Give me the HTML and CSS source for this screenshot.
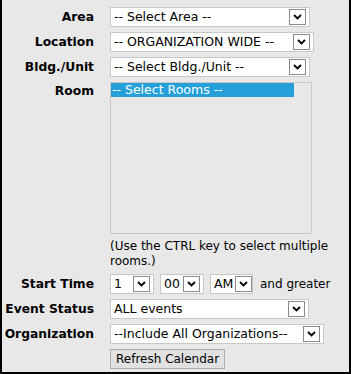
FILE: index.html
```html
<!DOCTYPE html>
<html lang="en">
<head>
    <meta charset="UTF-8">
    <meta name="viewport" content="width=device-width, initial-scale=1.0">
    <link rel="stylesheet" href="styles.css">
    <title>Calendar Filter</title>
</head>
<body>
    <div class="panel">
        <form class="filters" id="filters">
            <label class="label">Area</label>
            <div class="select select-area">
                <span class="value">-- Select Area --</span>
                <span class="arrow"><svg width="9" height="6" viewBox="0 0 9 6"><path d="M1 1 L4.5 4.5 L8 1" /></svg></span>
            </div>

            <label class="label">Location</label>
            <div class="select select-location">
                <span class="value">-- ORGANIZATION WIDE --</span>
                <span class="arrow"><svg width="9" height="6" viewBox="0 0 9 6"><path d="M1 1 L4.5 4.5 L8 1" /></svg></span>
            </div>

            <label class="label">Bldg./Unit</label>
            <div class="select select-area">
                <span class="value">-- Select Bldg./Unit --</span>
                <span class="arrow"><svg width="9" height="6" viewBox="0 0 9 6"><path d="M1 1 L4.5 4.5 L8 1" /></svg></span>
            </div>

            <label class="label label-top">Room</label>
            <div class="listbox">
                <div class="option selected">-- Select Rooms --</div>
            </div>

            <span></span>
            <p class="hint">(Use the CTRL key to select multiple rooms.)</p>

            <label class="label">Start Time</label>
            <div class="time-row">
                <div class="select select-small">
                    <span class="value">1</span>
                    <span class="arrow"><svg width="9" height="6" viewBox="0 0 9 6"><path d="M1 1 L4.5 4.5 L8 1" /></svg></span>
                </div>
                <div class="select select-small">
                    <span class="value">00</span>
                    <span class="arrow"><svg width="9" height="6" viewBox="0 0 9 6"><path d="M1 1 L4.5 4.5 L8 1" /></svg></span>
                </div>
                <div class="select select-small select-ampm">
                    <span class="value">AM</span>
                    <span class="arrow"><svg width="9" height="6" viewBox="0 0 9 6"><path d="M1 1 L4.5 4.5 L8 1" /></svg></span>
                </div>
                <span class="after">and greater</span>
            </div>

            <label class="label">Event Status</label>
            <div class="select select-status">
                <span class="value">ALL events</span>
                <span class="arrow"><svg width="9" height="6" viewBox="0 0 9 6"><path d="M1 1 L4.5 4.5 L8 1" /></svg></span>
            </div>

            <label class="label">Organization</label>
            <div class="select select-org">
                <span class="value">--Include All Organizations--</span>
                <span class="arrow"><svg width="9" height="6" viewBox="0 0 9 6"><path d="M1 1 L4.5 4.5 L8 1" /></svg></span>
            </div>

            <span></span>
            <div>
                <button type="button" class="btn">Refresh Calendar</button>
            </div>
        </form>
    </div>
</body>
</html>
```

FILE: styles.css
```css
*{
    box-sizing: border-box;
}

body{
    margin: 0;
    font-family: "DejaVu Sans", Verdana, sans-serif;
    font-size: 12px;
    color: #000;
}

.panel{
    width: 351px;
    background-color: #e8e8e8;
    border: 2px solid #000;
    border-top: none;
    padding: 7px 0 3px;
}

.filters{
    display: grid;
    grid-template-columns: 92px 1fr;
    column-gap: 16px;
    row-gap: 5px;
    align-items: center;
    margin: 0;
}

.label{
    font-weight: bold;
    font-size: 12.3px;
    text-align: right;
    white-space: nowrap;
}

.label-top{
    align-self: start;
    padding-top: 2px;
}

.select{
    display: flex;
    align-items: center;
    height: 20px;
    background-color: #fff;
    border: 1px solid #c8c8c8;
    padding: 0 3px 0 3px;
}

.select .value{
    flex: 1;
    font-size: 12.5px;
    white-space: nowrap;
    overflow: hidden;
    line-height: 18px;
}

.arrow{
    display: flex;
    align-items: center;
    justify-content: center;
    width: 17px;
    height: 16px;
    border: 1px solid #8a8a8a;
    background-color: #fff;
}

.arrow svg path{
    fill: none;
    stroke: #000;
    stroke-width: 1.8;
}

.select-area{
    width: 200px;
}

.select-location{
    width: 204px;
}

.select-status{
    width: 199px;
}

.select-org{
    width: 214px;
}

.select-small{
    width: 44px;
}

.select-ampm{
    width: 43px;
    padding-right: 0;
}

.listbox{
    width: 202px;
    height: 152px;
    border: 1px solid #c8c8c8;
    background-color: #e8e8e8;
}

.option{
    width: 183px;
    font-size: 12.5px;
    line-height: 14px;
    padding-left: 1px;
    white-space: nowrap;
}

.selected{
    background-color: #26a0da;
    color: #fff;
}

.hint{
    margin: 0;
    line-height: 15px;
}

.time-row{
    display: flex;
    align-items: center;
    gap: 6px;
}

.after{
    margin-left: 1px;
    white-space: nowrap;
}

.btn{
    font-family: "DejaVu Sans", Verdana, sans-serif;
    font-size: 12px;
    color: #000;
    height: 20px;
    padding: 0 5px;
    background-color: #e1e1e1;
    border: 1px solid #adadad;
    border-radius: 0;
}
```
